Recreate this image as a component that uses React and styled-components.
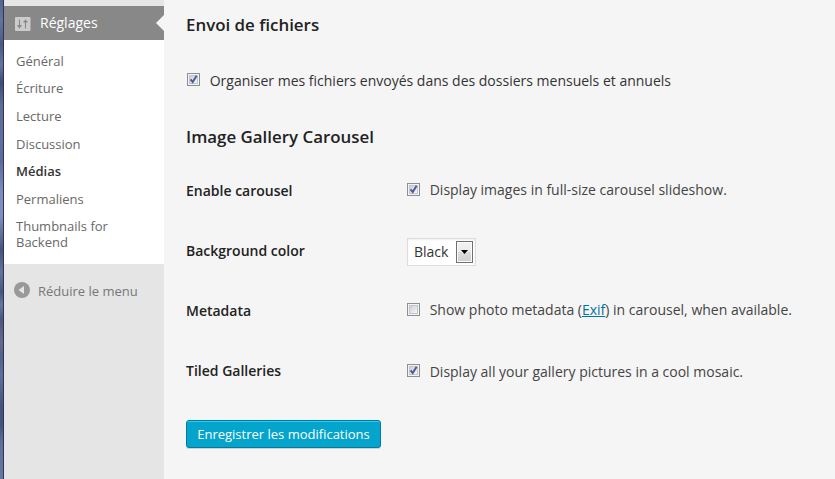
import { useState } from "react";
import styled, { createGlobalStyle } from "styled-components";

const GlobalStyle = createGlobalStyle`
  * {
    box-sizing: border-box;
  }
  body {
    margin: 0;
    background: #f5f5f5;
    color: #444;
    font-family: "Open Sans", sans-serif;
    font-size: 14px;
    overflow: hidden;
  }
`;

const Layout = styled.div`
  display: flex;
  height: 479px;
`;

const WindowEdge = styled.div`
  flex: none;
  width: 4px;
  border-right: 1px solid #30364f;
  background: linear-gradient(
    #53648f 0,
    #62739f 20px,
    #4a5a85 45px,
    #65759f 65px,
    #3f4d73 82px,
    #5c6c9a 105px,
    #5f70a0 140px,
    #5a6a9c 160px,
    #7c8abd 190px,
    #8290c2 215px,
    #46547c 250px,
    #64739c 272px,
    #47557d 292px,
    #6675a3 305px,
    #4a5780 318px,
    #66698a 342px,
    #52618d 358px,
    #5f70a0 375px,
    #46547c 405px,
    #46547c 425px,
    #5f70a0 445px,
    #65769f 479px
  );
`;

const Sidebar = styled.nav`
  flex: none;
  width: 160px;
  padding-top: 6px;
  background: #e5e5e5;
`;

const MenuHead = styled.div`
  position: relative;
  display: flex;
  align-items: center;
  height: 34px;
  padding-left: 11px;
  background: #888;
  color: #fff;
  line-height: 18px;

  svg {
    margin: 2px 9px 0 0;
  }

  &::after {
    content: "";
    position: absolute;
    top: 9px;
    right: 0;
    border: 8px solid transparent;
    border-left: 0;
    border-right-color: #f5f5f5;
  }
`;

const SubMenu = styled.ul`
  height: 224px;
  margin: 0;
  padding: 7.8px 0 8px;
  background: #fff;
  list-style: none;
`;

const SubItem = styled.li`
  padding: 6px 40px 6px 12px;
  color: ${({ $current }) => ($current ? "#333" : "#686868")};
  font-size: 13px;
  font-weight: ${({ $current }) => ($current ? 600 : 400)};
  line-height: 15.6px;
`;

const Collapse = styled.div`
  display: flex;
  align-items: center;
  height: 34px;
  margin-top: 10px;
  padding-left: 10px;
  color: #777;
  font-size: 13px;

  svg {
    margin: -3px 8px 0 0;
  }
`;

const Content = styled.main`
  flex: 1;
  padding: 12px 0 0 22px;
`;

const Title = styled.h3`
  margin: 0;
  color: #222;
  font-size: 16.9px;
  font-weight: 600;
  line-height: 26px;
`;

const UploadRow = styled.div`
  padding: 33px 0 33px;
`;

const Label = styled.label`
  display: flex;
  align-items: flex-start;
  height: 20px;
  color: ${({ $dark }) => ($dark ? "#333" : "#444")};
  line-height: 20px;
  white-space: pre;
`;

const Check = styled.span`
  flex: none;
  display: flex;
  width: 13px;
  height: 13px;
  margin: ${({ $top }) => $top}px 9.7px 0 ${({ $indent }) => ($indent ? 1 : 0)}px;
  border: 1px solid #8e8f8f;
  background: linear-gradient(135deg, #cbcfd5, #f6f6f6) 2px 2px / 7px 7px no-repeat #f4f4f4;
  box-shadow: inset 0 0 0 1px #f4f4f4, inset 0 0 0 2px #c3c7cd;
`;

const Table = styled.div`
  display: grid;
  grid-template-columns: 221px 1fr;
  grid-auto-rows: 60px;
  margin-top: 13px;
`;

const RowTitle = styled.div`
  padding-top: 18px;
  color: #222;
  font-weight: 600;
  line-height: 20px;
`;

const Cell = styled.div`
  padding-top: ${({ $top }) => $top || 17}px;
`;

const Select = styled.div`
  display: flex;
  align-items: center;
  justify-content: space-between;
  width: 69px;
  height: 28px;
  padding: 0 2px 0 6px;
  border: 1px solid #ddd;
  background: #fff;
  box-shadow: inset 0 1px 2px rgba(0, 0, 0, 0.07);
  color: #333;
`;

const SelectValue = styled.span`
  padding-bottom: 2px;
`;

const Arrow = styled.span`
  display: flex;
  align-items: center;
  justify-content: center;
  width: 17px;
  height: 22px;
  border: 1px solid #707070;
  background: linear-gradient(#f2f2f2, #ebebeb 50%, #ddd 50%, #cfcfcf);
  box-shadow: inset 0 0 0 1px #fcfcfc;
`;

const Link = styled.a`
  color: #0074a2;
  text-decoration: underline;
`;

const Submit = styled.button`
  display: block;
  width: 195px;
  height: 28px;
  margin-top: 17px;
  padding: 0 0 1px;
  border: 1px solid #037c9a;
  border-radius: 3px;
  background: #04a4cc;
  box-shadow: inset 0 1px 0 #22cffb, 0 1px 0 rgba(0, 0, 0, 0.15);
  color: #fff;
  font: 13px/26px "Open Sans", sans-serif;
  white-space: nowrap;
`;

const menu = ["Général", "Écriture", "Lecture", "Discussion", "Médias", "Permaliens", "Thumbnails for Backend"];

function SettingsIcon() {
  return (
    <svg width="16" height="14" viewBox="0 0 16 14">
      <rect width="15.5" height="14" rx="0.8" fill="#ccc" />
      <path d="M4.5 2.500v9M10.500 2.500v9" stroke="#888" strokeWidth="1.100" />
      <path d="M2.400 8h4.200v1.200L5.400 10.200H3.600L2.400 9.200zM8.400 5.600h4.200V4.400L11.400 3.400H9.600L8.400 4.400z" fill="#888" />
    </svg>
  );
}

function CollapseIcon() {
  return (
    <svg width="16" height="16" viewBox="0 0 16 16">
      <circle cx="8" cy="8" r="8" fill="#999" />
      <path d="M10 4v8L4.500 8z" fill="#e5e5e5" />
    </svg>
  );
}

function Option({ defaultChecked, dark, indent, boxTop = 3, children }) {
  const [checked, setChecked] = useState(defaultChecked);

  return (
    <Label $dark={dark} onClick={() => setChecked(!checked)}>
      <Check $top={boxTop} $indent={indent}>
        {checked && (
          <svg width="11" height="11" viewBox="0 0 11 11">
            <path d="M2.600 5.300 4.700 8 8.600 1.800" fill="none" stroke="#4a5f97" strokeWidth="2" />
          </svg>
        )}
      </Check>
      <span>{children}</span>
    </Label>
  );
}

function App() {
  return (
    <>
      <GlobalStyle />
      <Layout>
        <WindowEdge />
        <Sidebar>
          <MenuHead>
            <SettingsIcon />
            Réglages
          </MenuHead>
          <SubMenu>
            {menu.map((item) => (
              <SubItem key={item} $current={item === "Médias"}>
                {item}
              </SubItem>
            ))}
          </SubMenu>
          <Collapse>
            <CollapseIcon />
            Réduire le menu
          </Collapse>
        </Sidebar>
        <Content>
          <Title>Envoi de fichiers</Title>
          <UploadRow>
            <Option defaultChecked dark indent boxTop={2}>
              Organiser mes fichiers envoyés dans des dossiers mensuels et annuels
            </Option>
          </UploadRow>
          <Title>Image Gallery Carousel</Title>
          <Table>
            <RowTitle>Enable carousel</RowTitle>
            <Cell>
              <Option defaultChecked>Display images in full-size carousel slideshow.</Option>
            </Cell>
            <RowTitle>Background color</RowTitle>
            <Cell $top={15}>
              <Select>
                <SelectValue>Black</SelectValue>
                <Arrow>
                  <svg width="7" height="4" viewBox="0 0 7 4">
                    <path d="M0 0h7L3.500 4z" fill="#000" />
                  </svg>
                </Arrow>
              </Select>
            </Cell>
            <RowTitle>Metadata</RowTitle>
            <Cell>
              <Option>
                Show photo metadata (<Link>Exif</Link>) in carousel, when available.
              </Option>
            </Cell>
            <RowTitle>Tiled Galleries</RowTitle>
            <Cell $top={19}>
              <Option defaultChecked boxTop={2}>
                Display all your gallery pictures in a cool mosaic.
              </Option>
            </Cell>
          </Table>
          <Submit>Enregistrer les modifications</Submit>
        </Content>
      </Layout>
    </>
  );
}

export default App;
